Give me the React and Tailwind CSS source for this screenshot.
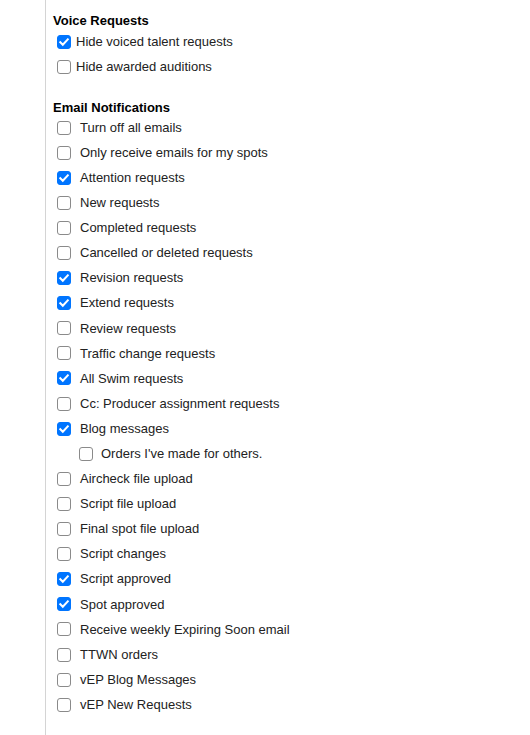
import React, { useState } from "react";

const voiceOptions = [
  { label: "Hide voiced talent requests", checked: true },
  { label: "Hide awarded auditions", checked: false },
];

const emailOptions = [
  { label: "Turn off all emails" },
  { label: "Only receive emails for my spots" },
  { label: "Attention requests", checked: true },
  { label: "New requests" },
  { label: "Completed requests" },
  { label: "Cancelled or deleted requests" },
  { label: "Revision requests", checked: true },
  { label: "Extend requests", checked: true },
  { label: "Review requests" },
  { label: "Traffic change requests" },
  { label: "All Swim requests", checked: true },
  { label: "Cc: Producer assignment requests" },
  { label: "Blog messages", checked: true },
  { label: "Orders I've made for others.", nested: true },
  { label: "Aircheck file upload" },
  { label: "Script file upload" },
  { label: "Final spot file upload" },
  { label: "Script changes" },
  { label: "Script approved", checked: true },
  { label: "Spot approved", checked: true },
  { label: "Receive weekly Expiring Soon email" },
  { label: "TTWN orders" },
  { label: "vEP Blog Messages" },
  { label: "vEP New Requests" },
];

// Windows-style checkbox box
const Checkbox = ({ initial }) => {
  const [checked, setChecked] = useState(!!initial);
  return (
    <span
      role="checkbox"
      aria-checked={checked}
      onClick={() => setChecked(!checked)}
      className={`flex shrink-0 items-center justify-center w-[14px] h-[14px] rounded-[3px] border ${
        checked ? "bg-[#0075ff] border-[#0075ff]" : "bg-white border-[#8a8a8a]"
      }`}
    >
      {checked && (
        <svg width="12" height="12" viewBox="0 0 12 12" fill="none">
          <path d="M2.3 6.2 L4.8 8.7 L9.8 3.3" stroke="#fff" strokeWidth="2" strokeLinecap="square" />
        </svg>
      )}
    </span>
  );
};

const App = () => {
  return (
    <div className="min-h-[735px] bg-white text-[13px] text-[#222] font-['Liberation_Sans',Arial,sans-serif]">
      <div className="ml-[45px] min-h-[735px] border-l border-[#d4d4d4] pl-[7px] pt-[13px]">
        {/* Voice section */}
        <h3 className="font-bold text-[13px] leading-[16px] text-black">Voice Requests</h3>
        <div className="mt-[5px] pl-[4px] flex flex-col gap-[9px]">
          {voiceOptions.map((opt) => (
            <label key={opt.label} className="flex items-center gap-[5px] h-[16px]">
              <Checkbox initial={opt.checked} />
              <span>{opt.label}</span>
            </label>
          ))}
        </div>

        {/* Email section */}
        <h3 className="mt-[25px] font-bold text-[13px] leading-[16px] text-black">Email Notifications</h3>
        <div className="-mt-[1px] pl-[4px] flex flex-col">
          {emailOptions.map((opt) => (
            <label
              key={opt.label}
              className={`flex items-center h-[25.1px] ${opt.nested ? "pl-[22px] gap-[8px]" : "gap-[9px]"}`}
            >
              <Checkbox initial={opt.checked} />
              <span>{opt.label}</span>
            </label>
          ))}
        </div>
      </div>
    </div>
  );
};

export default App;
